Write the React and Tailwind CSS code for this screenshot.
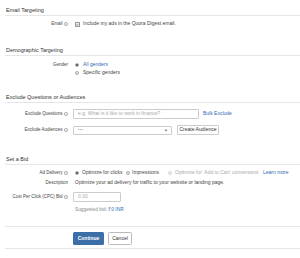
import React from "react";

const Info = () => (
  <svg width="4" height="4" viewBox="0 0 10 10" className="inline-block ml-[1.5px] align-middle">
    <circle cx="5" cy="5" r="4.2" fill="none" stroke="#777" strokeWidth="1.2" />
    <rect x="4.4" y="4.2" width="1.2" height="3.4" fill="#777" />
    <rect x="4.4" y="2.4" width="1.2" height="1.2" fill="#777" />
  </svg>
);

const Radio = ({ on, faded }) => (
  <span
    className={`inline-flex items-center justify-center w-[4px] h-[4px] rounded-full border-[0.6px] ${
      faded ? "border-[#d6d6d6] bg-[#f2f2f2]" : "border-[#aaa] bg-[#e8e8e8]"
    }`}
  >
    {on && <span className="w-[2px] h-[2px] rounded-full bg-[#444]" />}
  </span>
);

const Title = ({ children, mt }) => (
  <div className={`${mt} h-[11px] leading-[10px] text-[5.5px] text-[#333] border-b border-[#e6e6e6]`}>
    <div className="pl-[1px]">{children}</div>
  </div>
);

const Row = ({ label, info, h, mt, children }) => (
  <div className={`flex items-center ${h} ${mt}`}>
    <div className="w-[63px] text-right text-[4.5px] text-[#444] flex items-center justify-end whitespace-nowrap">
      {label}
      {info && <Info />}
    </div>
    <div className="ml-[5px] flex items-center text-[5px] text-[#444] flex-1 whitespace-nowrap">{children}</div>
  </div>
);

export default function App() {
  return (
    <div
      className="w-[300px] h-[258px] bg-white overflow-hidden pl-[5px]"
      style={{ fontFamily: '"Liberation Sans", Arial, sans-serif' }}
    >
      <Title mt="mt-[5px]">Email Targeting</Title>
      <Row label="Email" info h="h-[8px]" mt="mt-[4px]">
        <span className="ml-[2px] w-[5px] h-[5px] border-[0.6px] border-[#999] bg-[#eee] flex items-center justify-center">
          <svg width="5" height="5" viewBox="0 0 10 10">
            <path d="M2 5.2 L4.2 7.4 L8.2 2.6" fill="none" stroke="#333" strokeWidth="1.6" />
          </svg>
        </span>
        <span className="ml-[3px]">Include my ads in the Quora Digest email.</span>
      </Row>

      <Title mt="mt-[17px]">Demographic Targeting</Title>
      <Row label="Gender" h="h-[8px]" mt="mt-[5px]">
        <span className="ml-[2px] flex"><Radio on /></span>
        <span className="ml-[4px] text-[#2e6cb5]">All genders</span>
      </Row>
      <Row label="" h="h-[8px]" mt="mt-0">
        <span className="ml-[2px] flex"><Radio /></span>
        <span className="ml-[4px]">Specific genders</span>
      </Row>

      <Title mt="mt-[15px]">Exclude Questions or Audiences</Title>
      <Row label="Exclude Questions" info h="h-[10px]" mt="mt-[6px]">
        <div className="w-[126px] h-[10px] border-[0.6px] border-[#ccc] rounded-[1px] flex items-center pl-[4px] text-[#aaa]">
          e.g. What is it like to work in finance?
        </div>
        <span className="ml-[4px] text-[#2e6cb5]">Bulk Exclude</span>
      </Row>
      <Row label="Exclude Audiences" info h="h-[10px]" mt="mt-[6px]">
        <div className="w-[99px] h-[9px] border-[0.6px] border-[#ccc] rounded-[1px] flex items-center justify-between pl-[4px] pr-[3px] text-[#555]">
          <span>---</span>
          <svg width="4" height="3" viewBox="0 0 8 6">
            <path d="M1 1.5 L4 4.5 L7 1.5 Z" fill="#555" />
          </svg>
        </div>
        <div className="ml-[5px] h-[10px] w-[42px] border-[0.6px] border-[#ccc] rounded-[1px] flex items-center justify-center text-[#333]">
          Create Audience
        </div>
      </Row>

      <Title mt="mt-[19px]">Set a Bid</Title>
      <Row label="Ad Delivery" info h="h-[8px]" mt="mt-[4px]">
        <span className="ml-[2px] flex"><Radio on /></span>
        <span className="ml-[3px] w-[41px]">Optimize for clicks</span>
        <span className="ml-[3px] flex"><Radio /></span>
        <span className="ml-[2px] w-[34px]">Impressions</span>
        <span className="ml-[2px] flex"><Radio faded /></span>
        <span className="ml-[3px] w-[85px] text-[#aaa]">Optimize for 'Add to Cart' conversions</span>
        <span className="ml-[3px] text-[#2e6cb5]">Learn more</span>
      </Row>
      <Row label="Description" h="h-[8px]" mt="mt-[2px]">
        <span className="ml-[2px]">Optimize your ad delivery for traffic to your website or landing page.</span>
      </Row>
      <Row label="Cost Per Click (CPC) Bid" info h="h-[10px]" mt="mt-[5px]">
        <div className="w-[48px] h-[10px] border-[0.6px] border-[#ccc] rounded-[1px] flex items-center pl-[4px] text-[#aaa]">
          0.00
        </div>
      </Row>
      <div className="mt-[5px] h-[6px] flex items-center pl-[70px] text-[4.8px] text-[#888]">
        Suggested bid:&nbsp;<span className="text-[#2e6cb5]">₹0 INR</span>
      </div>

      <div className="mt-[13px] border-t border-[#e6e6e6]" />
      <div className="mt-[5px] h-[13px] flex pl-[68px] gap-[4px]">
        <div className="w-[31px] h-[13px] bg-[#3c6ea8] rounded-[1.5px] flex items-center justify-center text-white text-[5px] font-bold">
          Continue
        </div>
        <div className="w-[24px] h-[13px] bg-white border-[0.6px] border-[#bbb] rounded-[1.5px] flex items-center justify-center text-[#333] text-[5px]">
          Cancel
        </div>
      </div>
      <div className="mt-[3px] border-t border-[#e6e6e6]" />
    </div>
  );
}
